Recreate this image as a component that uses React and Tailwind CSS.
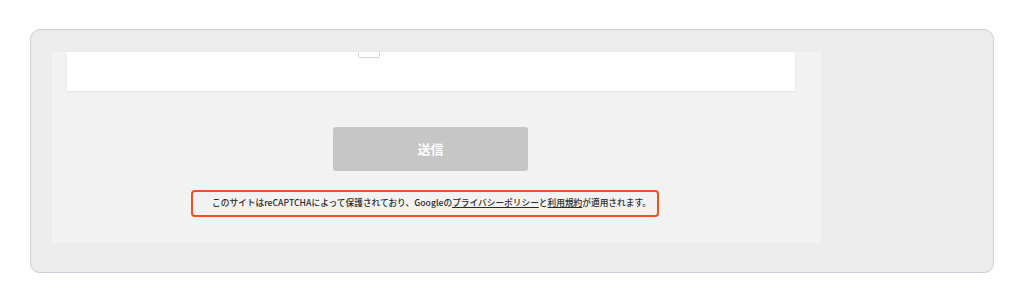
import React from 'react';

const font = { fontFamily: '"Noto Sans CJK JP", "Noto Sans", sans-serif' };

const App = () => {
  return (
    <div className="w-[1024px] h-[303px] bg-white pt-[29px] px-[30px]" style={font}>
      {/* outer card */}
      <div className="h-[244px] rounded-[10px] border border-[#cfcdd9] bg-[#ececec] pt-[22px] pl-[21px]">
        {/* form panel */}
        <div className="w-[770px] h-[191px] bg-[#f2f2f2] flex flex-col">
          <div className="ml-[15px] w-[728px] h-[39px] bg-white shadow-[0_1px_2px_rgba(0,0,0,0.06)]">
            <div className="ml-[291px] w-[22px] h-[6px] border border-t-0 border-[#d6d6d6] rounded-b-[2px] bg-white" />
          </div>

          <button
            type="button"
            className="mt-[36px] ml-[281px] w-[195px] h-[44px] rounded-[3px] bg-[#c6c6c6] text-white text-[13px] font-bold"
          >
            送信
          </button>

          <div className="mt-[19px] ml-[139px] w-[468px] h-[27px] rounded-[4px] border-2 border-[#f24e22] flex items-center pl-[19px]">
            <p className="text-[8.7px] font-medium text-[#2b2b2b] whitespace-nowrap leading-none">
              このサイトはreCAPTCHAによって保護されており、Googleの
              <a href="#" className="underline">プライバシーポリシー</a>
              と
              <a href="#" className="underline">利用規約</a>
              が適用されます。
            </p>
          </div>
        </div>
      </div>
    </div>
  );
};

export default App;
